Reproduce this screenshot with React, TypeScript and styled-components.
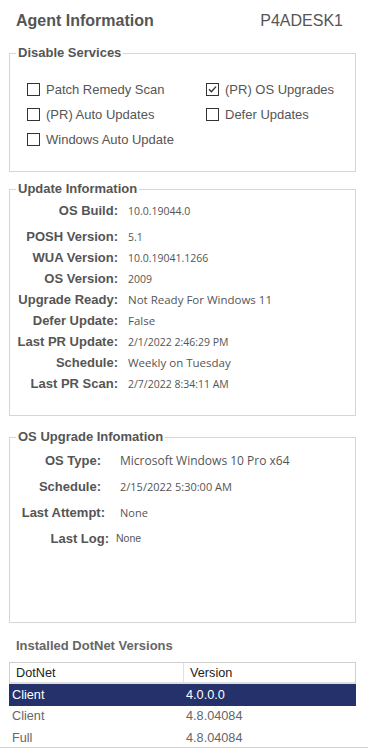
import React from "react";
import styled, { createGlobalStyle } from "styled-components";

const Global = createGlobalStyle`
  html, body { margin: 0; padding: 0; background: #fff; }
  body { font-family: "Liberation Sans", Arial, sans-serif; color: #555; }
  * { box-sizing: border-box; }
`;

const Viewport = styled.div`
  width: 368px;
  height: 755px;
  background: #fff;
`;

const Scroller = styled.div`
  height: 748px;
  overflow: hidden;
  border-bottom: 1px solid #d3d3d3;
`;

const TitleBar = styled.header`
  display: flex;
  justify-content: space-between;
  align-items: center;
  height: 30px;
  padding: 12px 25px 0 16px;
`;

const Title = styled.h1`
  margin: 0;
  font-size: 16px;
  line-height: 18px;
  font-weight: bold;
  color: #555;
`;

const Host = styled.span`
  font-size: 16px;
  line-height: 18px;
  color: #555;
`;

const Group = styled.fieldset<{ $mt: number; $pt: number; $pb: number }>`
  margin: ${(p) => p.$mt}px 12px 0 9px;
  padding: ${(p) => p.$pt}px 6px ${(p) => p.$pb}px 6px;
  border: 1px solid #d6d6d6;
  min-width: 0;
`;

const Legend = styled.legend`
  padding: 0 2px;
  font-size: 13px;
  line-height: 16px;
  font-weight: bold;
  color: #555;
`;

const CheckGrid = styled.div`
  display: grid;
  grid-template-columns: 179px 1fr;
  grid-auto-rows: 25px;
  padding-left: 11px;
`;

const CheckItem = styled.label`
  display: flex;
  align-items: center;
  gap: 6px;
  font-size: 13px;
  color: #555;
  white-space: nowrap;
`;

const Box = styled.span`
  display: flex;
  align-items: center;
  justify-content: center;
  width: 13px;
  height: 13px;
  border: 1px solid #333;
  background: #fff;
  flex-shrink: 0;
`;

const InfoRow = styled.div<{ $h: number; $mb?: number }>`
  display: flex;
  align-items: center;
  height: ${(p) => p.$h}px;
  margin-bottom: ${(p) => p.$mb ?? 0}px;
`;

const Label = styled.span<{ $w: number }>`
  width: ${(p) => p.$w}px;
  flex-shrink: 0;
  text-align: right;
  font-size: 13px;
  font-weight: bold;
  color: #555;
  white-space: nowrap;
`;

const Value = styled.span<{ $ml: number; $size: number; $arial?: boolean }>`
  margin-left: ${(p) => p.$ml}px;
  font-family: ${(p) =>
    p.$arial ? `"Liberation Sans", Arial, sans-serif` : `"Open Sans", "Noto Sans", sans-serif`};
  font-size: ${(p) => p.$size}px;
  color: #555;
  white-space: nowrap;
`;

const TableHeading = styled.h2`
  margin: 15px 0 8px 16px;
  font-size: 13px;
  line-height: 16px;
  font-weight: bold;
  color: #666;
`;

const Table = styled.div`
  margin: 0 12px 0 9px;
`;

const HeaderRow = styled.div`
  display: grid;
  grid-template-columns: 174px 1fr;
  height: 22px;
  border: 1px solid #cfcfcf;
  border-bottom: 2px solid #dedede;
  background: #fff;
`;

const HeaderCell = styled.div<{ $divider?: boolean }>`
  display: flex;
  align-items: center;
  padding-left: 6px;
  font-size: 12.7px;
  color: #222;
  border-right: ${(p) => (p.$divider ? "1px solid #e2e2e2" : "none")};
`;

const BodyRow = styled.div<{ $selected?: boolean }>`
  display: grid;
  grid-template-columns: 174px 1fr;
  height: 21.5px;
  background: ${(p) => (p.$selected ? "#24316a" : "#fff")};
  color: ${(p) => (p.$selected ? "#fff" : "#666")};
`;

const BodyCell = styled.div<{ $pl: number }>`
  display: flex;
  align-items: center;
  padding-left: ${(p) => p.$pl}px;
  font-size: 12.7px;
`;

const Check = ({ label, checked }: { label: string; checked?: boolean }) => (
  <CheckItem>
    <Box>
      {checked && (
        <svg width="11" height="11" viewBox="0 0 11 11">
          <polyline points="2,5.3 4.4,7.8 9,2.6" fill="none" stroke="#333" strokeWidth="1.4" />
        </svg>
      )}
    </Box>
    {label}
  </CheckItem>
);

const updateInfo: [string, string, number][] = [
  ["OS Build:", "10.0.19044.0", 10.5],
  ["POSH Version:", "5.1", 10.5],
  ["WUA Version:", "10.0.19041.1266", 10.5],
  ["OS Version:", "2009", 10.5],
  ["Upgrade Ready:", "Not Ready For Windows 11", 11.5],
  ["Defer Update:", "False", 11.5],
  ["Last PR Update:", "2/1/2022 2:46:29 PM", 10.5],
  ["Schedule:", "Weekly on Tuesday", 11.5],
  ["Last PR Scan:", "2/7/2022 8:34:11 AM", 10.5],
];

type UpRow = { label: string; value: string; w: number; ml: number; size: number; arial?: boolean };
const upgradeInfo: UpRow[] = [
  { label: "OS Type:", value: "Microsoft Windows 10 Pro x64", w: 85, ml: 19, size: 12 },
  { label: "Schedule:", value: "2/15/2022 5:30:00 AM", w: 85, ml: 19, size: 11 },
  { label: "Last Attempt:", value: "None", w: 89, ml: 15, size: 11 },
  { label: "Last Log:", value: "None", w: 93, ml: 7, size: 10.5, arial: true },
];

const dotnet: [string, string][] = [
  ["Client", "4.0.0.0"],
  ["Client", "4.8.04084"],
  ["Full", "4.8.04084"],
];

export default function App() {
  return (
    <Viewport>
      <Global />
      <Scroller>
        <TitleBar>
          <Title>Agent Information</Title>
          <Host>P4ADESK1</Host>
        </TitleBar>

        <Group $mt={15} $pt={16} $pb={19}>
          <Legend>Disable Services</Legend>
          <CheckGrid>
            <Check label="Patch Remedy Scan" />
            <Check label="(PR) OS Upgrades" checked />
            <Check label="(PR) Auto Updates" />
            <Check label="Defer Updates" />
            <Check label="Windows Auto Update" />
          </CheckGrid>
        </Group>

        <Group $mt={9} $pt={3} $pb={21}>
          <Legend>Update Information</Legend>
          {updateInfo.map(([l, v, s], i) => (
            <InfoRow key={l} $h={21} $mb={i === 0 ? 5 : 0}>
              <Label $w={102}>{l}</Label>
              <Value $ml={10} $size={s}>
                {v}
              </Value>
            </InfoRow>
          ))}
        </Group>

        <Group $mt={13} $pt={2} $pb={71}>
          <Legend>OS Upgrade Infomation</Legend>
          {upgradeInfo.map((r) => (
            <InfoRow key={r.label} $h={26}>
              <Label $w={r.w}>{r.label}</Label>
              <Value $ml={r.ml} $size={r.size} $arial={r.arial}>
                {r.value}
              </Value>
            </InfoRow>
          ))}
        </Group>

        <TableHeading>Installed DotNet Versions</TableHeading>
        <Table>
          <HeaderRow>
            <HeaderCell $divider>DotNet</HeaderCell>
            <HeaderCell>Version</HeaderCell>
          </HeaderRow>
          {dotnet.map(([n, v], i) => (
            <BodyRow key={i} $selected={i === 0}>
              <BodyCell $pl={3}>{n}</BodyCell>
              <BodyCell $pl={3}>{v}</BodyCell>
            </BodyRow>
          ))}
        </Table>
      </Scroller>
    </Viewport>
  );
}
